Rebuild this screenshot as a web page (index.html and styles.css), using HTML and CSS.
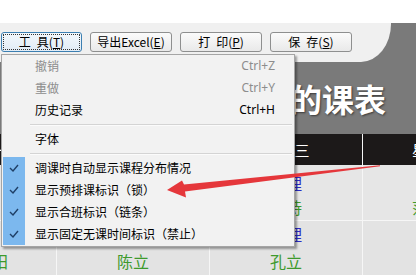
FILE: index.html
```html
<!DOCTYPE html>
<html lang="zh-CN">
<head>
  <meta charset="UTF-8">
  <meta name="viewport" content="width=device-width, initial-scale=1.0">
  <title>课表</title>
  <link rel="stylesheet" href="styles.css">
</head>
<body>
  <div class="topgap"></div>
  <div class="banner">
    <div class="toolbar">
      <button class="btn focus">工&ensp;具(<u>T</u>)</button>
      <button class="btn">导出Excel(<u>E</u>)</button>
      <button class="btn">打&ensp;印(<u>P</u>)</button>
      <button class="btn">保&ensp;存(<u>S</u>)</button>
    </div>
    <h1 class="title">张三老师的课表</h1>
  </div>

  <div class="timetable">
    <div class="head">星期一</div>
    <div class="head">星期二</div>
    <div class="head shift">星期三</div>
    <div class="head next">星期四</div>

    <div class="cell r1"><span class="course">语文</span><span class="teacher">李阳</span></div>
    <div class="cell r1"><span class="course">数学</span><span class="teacher">王芳</span></div>
    <div class="cell r1"><span class="course">物理</span><span class="teacher">陈诗</span></div>
    <div class="cell r1 next"><span class="course">化学</span><span class="teacher">范文涛</span></div>

    <div class="cell r2 lead"><span class="course">英语</span><span class="teacher">司马阳</span></div>
    <div class="cell r2"><span class="course">历史</span><span class="teacher">陈立</span></div>
    <div class="cell r2"><span class="course">地理</span><span class="teacher">孔立</span></div>
    <div class="cell r2 next"><span class="course"></span><span class="teacher"></span></div>
  </div>

  <!-- dropdown of the tools button -->
  <div class="menu">
    <div class="item disabled"><span class="gutter"></span><span class="label">撤销</span><span class="key">Ctrl+Z</span></div>
    <div class="item disabled"><span class="gutter"></span><span class="label">重做</span><span class="key">Ctrl+Y</span></div>
    <div class="item"><span class="gutter"></span><span class="label">历史记录</span><span class="key">Ctrl+H</span></div>
    <div class="sep"></div>
    <div class="item"><span class="gutter"></span><span class="label">字体</span></div>
    <div class="sep"></div>
    <div class="item checked"><span class="gutter"><svg width="10" height="8" viewBox="0 0 10 8"><polyline points="1,4 4,7 9,1" /></svg></span><span class="label">调课时自动显示课程分布情况</span></div>
    <div class="item checked"><span class="gutter"><svg width="10" height="8" viewBox="0 0 10 8"><polyline points="1,4 4,7 9,1" /></svg></span><span class="label">显示预排课标识（锁）</span></div>
    <div class="item checked"><span class="gutter"><svg width="10" height="8" viewBox="0 0 10 8"><polyline points="1,4 4,7 9,1" /></svg></span><span class="label">显示合班标识（链条）</span></div>
    <div class="item checked"><span class="gutter"><svg width="10" height="8" viewBox="0 0 10 8"><polyline points="1,4 4,7 9,1" /></svg></span><span class="label">显示固定无课时间标识（禁止）</span></div>
  </div>

  <!-- red annotation arrow -->
  <svg class="arrow" width="416" height="275" viewBox="0 0 416 275">
    <polygon points="167,190 182,180.5 184,184.5 380,165.3 380,166.3 185,191.5 186,197.5" />
  </svg>
</body>
</html>
```

FILE: styles.css
```css
html, body {
  margin: 0;
  padding: 0;
  overflow: hidden;
  background: #fff;
  font-family: "Noto Sans CJK SC", "Noto Sans", sans-serif;
}
.topgap {
  height: 23px;
}

/* Banner with toolbar */
.banner {
  height: 111px;
  background: #7a7a7a;
}
.toolbar {
  box-sizing: border-box;
  width: 391px;
  height: 39px;
  padding: 9px 0 0 1px;
  display: flex;
  gap: 8px;
  align-items: flex-start;
  background: #f0f0f0;
  border-bottom-right-radius: 30px 38px;
}
.btn {
  box-sizing: border-box;
  width: 82px;
  height: 20px;
  padding: 0;
  font-family: "Noto Sans CJK SC", sans-serif;
  font-size: 12px;
  line-height: 18px;
  color: #000;
  background: linear-gradient(#fbfbfb, #e9e9e9);
  border: 1px solid #8e8f8f;
  border-radius: 3px;
}
.btn u {
  text-underline-offset: 1px;
}
.btn.focus {
  width: 81px;
  border-color: #3c7fb1;
  outline: 1px dotted #333;
  outline-offset: -3px;
  background: linear-gradient(#f3f8fc, #e1ecf6);
}
.title {
  margin: 0;
  height: 72px;
  line-height: 72px;
  padding-right: 30px;
  text-align: right;
  font-size: 32px;
  font-weight: 700;
  color: #fff;
  text-shadow: 1px 1px 2px #3a3a3a;
}

/* Timetable */
.timetable {
  display: grid;
  grid-template-columns: repeat(4, 152px);
  column-gap: 1px;
  margin-left: -96px;
  background: #f6f6f6;
}
.head {
  height: 31px;
  line-height: 31px;
  text-align: center;
  font-size: 15px;
  color: #fff;
  background: #1c1919;
}
.head.shift {
  padding-left: 2px;
}
.head.next {
  padding-right: 9px;
}
.cell {
  display: flex;
  flex-direction: column;
  align-items: center;
  background: #e6e6e6;
  font-size: 16px;
  line-height: 20px;
}
.cell.next {
  padding-right: 6px;
}
.cell.lead {
  padding-left: 8px;
}
.cell.r1 {
  height: 56px;
  box-sizing: border-box;
  padding-top: 8px;
  gap: 4px;
  border-bottom: 1px solid #f6f6f6;
}
.cell.r2 {
  height: 60px;
  padding-top: 3px;
  gap: 7px;
  background: #e3e3e3;
}
.course {
  color: #2a2ac4;
  min-height: 20px;
}
.teacher {
  color: #3d9a2c;
}

/* Dropdown menu */
.menu {
  position: absolute;
  left: 1px;
  top: 54px;
  width: 289px;
  padding: 0 2px 1px 1px;
  background: #f2f2f2;
  border: 1px solid #a5a5a5;
  box-shadow: 2px 2px 2px rgba(0, 0, 0, 0.35);
  font-size: 12px;
  color: #000;
}
.item {
  display: flex;
  align-items: center;
  height: 22px;
  line-height: 22px;
}
.gutter {
  width: 22px;
  height: 22px;
  display: flex;
  align-items: center;
  justify-content: center;
}
.checked .gutter {
  background: #7cb8ee;
}
.gutter svg polyline {
  fill: none;
  stroke: #1f3f66;
  stroke-width: 1.4;
}
.label {
  padding-left: 10px;
}
.key {
  margin-left: auto;
  padding-right: 17px;
  font-family: "Noto Sans", sans-serif;
  font-size: 12px;
}
.disabled {
  color: #8d8d8d;
}
.sep {
  height: 7px;
  margin-left: 27px;
  display: flex;
  align-items: center;
}
.sep::before {
  content: "";
  flex: 1;
  height: 1px;
  background: #d4d4d4;
  border-bottom: 1px solid #fbfbfb;
}

/* Annotation */
.arrow {
  position: absolute;
  left: 0;
  top: 0;
  pointer-events: none;
}
.arrow polygon {
  fill: #e5373b;
}
```
